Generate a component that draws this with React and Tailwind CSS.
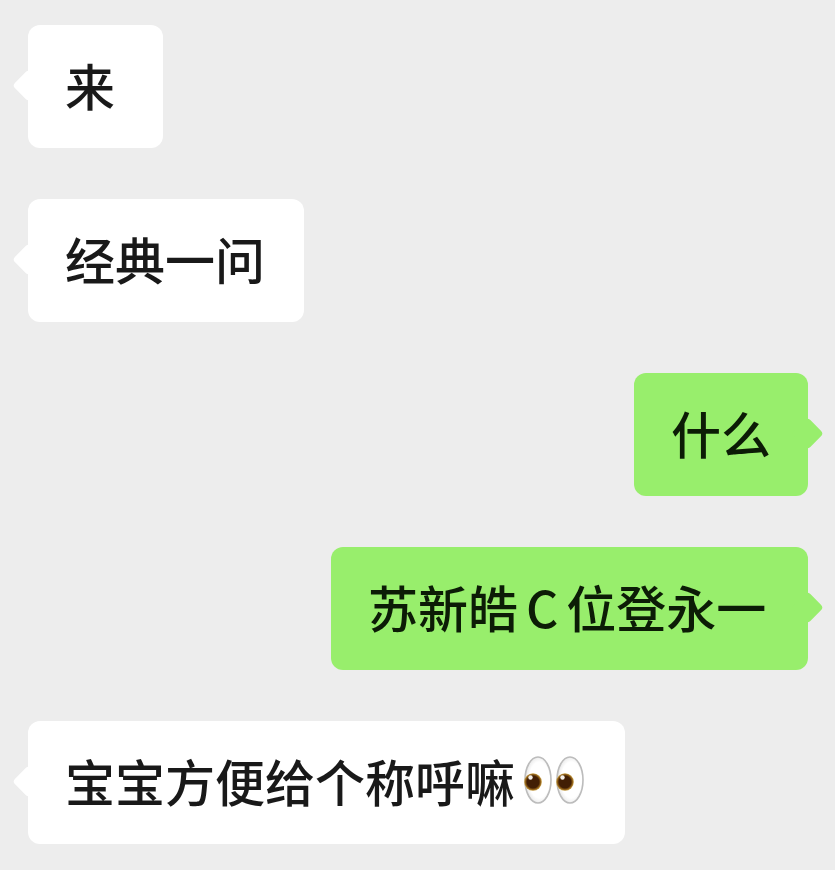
function Eye() {
  return (
    <svg width="28" height="48" viewBox="0 0 28 48" className="shrink-0">
      <defs>
        <radialGradient id="white" cx="0.55" cy="0.5" r="0.6">
          <stop offset="0.65" stopColor="#ffffff" />
          <stop offset="1" stopColor="#dedede" />
        </radialGradient>
        <radialGradient id="iris" cx="0.5" cy="0.5" r="0.5">
          <stop offset="0.68" stopColor="#421f05" />
          <stop offset="0.84" stopColor="#8a5a14" />
          <stop offset="1" stopColor="#c9a14a" />
        </radialGradient>
      </defs>
      <ellipse cx="14" cy="24" rx="13" ry="23" fill="url(#white)" stroke="#bcbcbc" strokeWidth="1.6" />
      <circle cx="9" cy="26" r="8.8" fill="url(#iris)" />
      <circle cx="6.5" cy="21.5" r="2.2" fill="#f4f0ea" />
    </svg>
  );
}

function Bubble({ me, width, children }) {
  return (
    <div className={`flex ${me ? "justify-end pr-[27px]" : "justify-start pl-[28px]"}`}>
      <div className={`relative flex h-[123px] items-center rounded-[12px] pl-[37px] ${me ? "bg-[#98ee6c] text-[#0c1c06]" : "bg-white"}`} style={{ width }}>
        <div className={`absolute top-[49px] h-[23px] w-[23px] rotate-45 rounded-[4px] ${me ? "right-[-11px] bg-[#98ee6c]" : "left-[-11px] bg-white"}`} />
        <div className="relative flex items-center whitespace-nowrap pb-[5px]">{children}</div>
      </div>
    </div>
  );
}

export default function App() {
  return (
    <div className="flex h-[870px] w-[835px] flex-col gap-[51px] overflow-hidden bg-[#ededed] pt-[25px] font-['Noto_Sans_CJK_SC',sans-serif] text-[50px] font-medium leading-none text-[#191919]">
      <Bubble width={135}>来</Bubble>
      <Bubble width={276}>经典一问</Bubble>
      <Bubble me width={174}>什么</Bubble>
      <Bubble me width={477}>苏新皓<span className="mx-[8px]">C</span>位登永一</Bubble>
      <Bubble width={597}>
        宝宝方便给个称呼嘛
        <span className="ml-[9px] flex gap-[4px]"><Eye /><Eye /></span>
      </Bubble>
    </div>
  );
}
